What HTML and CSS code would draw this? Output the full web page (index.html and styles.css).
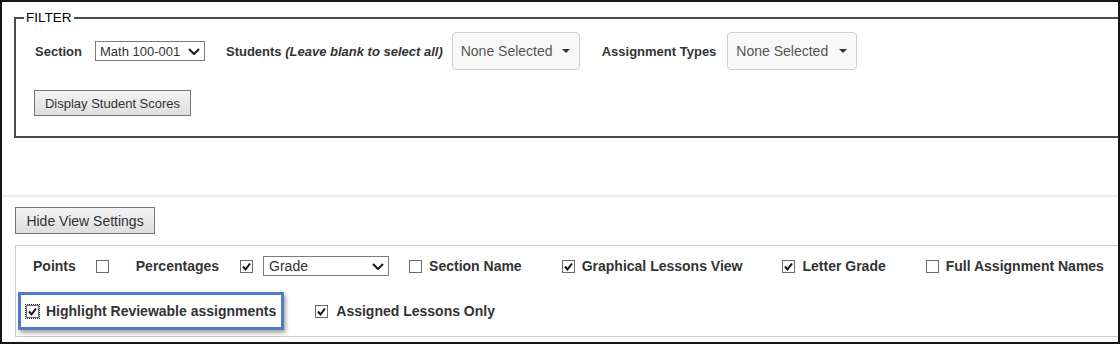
FILE: index.html
```html
<!DOCTYPE html>
<html>
<head>
<meta charset="utf-8">
<link rel="stylesheet" href="styles.css">
</head>
<body>
<div class="frame">
  <fieldset class="filter">
    <legend>FILTER</legend>
    <div class="filter-row">
      <span class="flabel section-label">Section</span>
      <div class="select sel-section"><span>Math 100-001</span><svg class="chev" width="12" height="7" viewBox="0 0 12 7"><path d="M1 1 L6 6 L11 1" /></svg></div>
      <span class="flabel students-label">Students <em>(Leave blank to select all)</em></span>
      <button class="ms ms-students"><span>None Selected</span><span class="caret"></span></button>
      <span class="flabel types-label">Assignment Types</span>
      <button class="ms ms-types"><span>None Selected</span><span class="caret"></span></button>
    </div>
    <div class="filter-actions">
      <button class="btn btn-display">Display Student Scores</button>
    </div>
  </fieldset>

  <div class="view">
    <button class="btn btn-hide">Hide View Settings</button>
    <div class="settings">
      <div class="srow srow1">
        <span class="slabel points-label">Points</span>
        <span class="cb cb-points"></span>
        <span class="slabel pct-label">Percentages</span>
        <span class="cb cb-pct"><svg width="11" height="11" viewBox="0 0 11 11"><path d="M2 5.5 L4.5 8.5 L9 2.5" /></svg></span>
        <div class="select sel-grade"><span>Grade</span><svg class="chev" width="12" height="7" viewBox="0 0 12 7"><path d="M1 1 L6 6 L11 1" /></svg></div>
        <span class="opt"><span class="cb"></span><span class="slabel">Section Name</span></span>
        <span class="opt"><span class="cb"><svg width="11" height="11" viewBox="0 0 11 11"><path d="M2 5.5 L4.5 8.5 L9 2.5" /></svg></span><span class="slabel">Graphical Lessons View</span></span>
        <span class="opt"><span class="cb"><svg width="11" height="11" viewBox="0 0 11 11"><path d="M2 5.5 L4.5 8.5 L9 2.5" /></svg></span><span class="slabel">Letter Grade</span></span>
        <span class="opt"><span class="cb"></span><span class="slabel">Full Assignment Names</span></span>
      </div>
      <div class="srow srow2">
        <div class="highlight"><span class="cb cb-focus"><svg width="11" height="11" viewBox="0 0 11 11"><path d="M2 5.5 L4.5 8.5 L9 2.5" /></svg></span><span class="slabel">Highlight Reviewable assignments</span></div>
        <span class="opt opt-assigned"><span class="cb"><svg width="11" height="11" viewBox="0 0 11 11"><path d="M2 5.5 L4.5 8.5 L9 2.5" /></svg></span><span class="slabel">Assigned Lessons Only</span></span>
      </div>
    </div>
  </div>
</div>
</body>
</html>
```

FILE: styles.css
```css
html, body {
  margin: 0;
  padding: 0;
  background: #fff;
}

body {
  font-family: "Liberation Sans", Arial, sans-serif;
  color: #333;
}

.frame {
  width: 1120px;
  height: 344px;
  box-sizing: border-box;
  border: 2px solid #151515;
  overflow: hidden;
  background: #fff;
}

/* ---------- Filter fieldset ---------- */
.filter {
  margin: 8px 0 0 12px;
  padding: 0 0 20px 0;
  border: 2px solid #4a4a4a;
  width: 1110px;
  box-sizing: border-box;
  min-width: 0;
}

.filter legend {
  margin-left: 8px;
  padding: 0 2px;
  font-size: 13.5px;
  line-height: 15px;
  color: #000;
}

.filter-row {
  display: flex;
  align-items: center;
  height: 38px;
  margin-top: 7px;
  padding-left: 19px;
}

.flabel {
  font-size: 13px;
  font-weight: bold;
  color: #333;
  white-space: nowrap;
}

.flabel em {
  font-style: italic;
}

.section-label {
  margin-right: 13px;
}

.students-label {
  margin-left: 21px;
  margin-right: 9px;
}

.types-label {
  margin-left: 22px;
  margin-right: 11px;
}

.select {
  display: flex;
  align-items: center;
  justify-content: space-between;
  box-sizing: border-box;
  height: 20px;
  border: 1px solid #7a7a7a;
  background: #fff;
  color: #333;
  font-size: 13px;
  padding: 0 4px 0 4px;
}

.chev path {
  fill: none;
  stroke: #1a1a1a;
  stroke-width: 2;
}

.sel-section {
  width: 110px;
}

.ms {
  display: flex;
  align-items: center;
  justify-content: space-between;
  box-sizing: border-box;
  height: 38px;
  border: 1px solid #cfcfcf;
  border-radius: 4px;
  background: #f8f8f8;
  color: #555;
  font-family: "Liberation Sans", Arial, sans-serif;
  font-size: 14px;
  padding: 0 9px 0 8px;
  margin: 0;
  white-space: nowrap;
}

.ms-students {
  width: 128px;
}

.ms-types {
  width: 130px;
}

.caret {
  width: 0;
  height: 0;
  border-top: 4px solid #333;
  border-left: 4px solid transparent;
  border-right: 4px solid transparent;
}

.filter-actions {
  margin-top: 20px;
  padding-left: 18px;
  display: flex;
}

.btn {
  box-sizing: border-box;
  border: 1px solid #767676;
  border-radius: 0;
  background: linear-gradient(#f4f4f4, #dedede);
  color: #333;
  font-family: "Liberation Sans", Arial, sans-serif;
  margin: 0;
  padding: 0;
  white-space: nowrap;
  text-align: center;
}

.btn-display {
  width: 157px;
  height: 26px;
  font-size: 13px;
}

/* ---------- View settings ---------- */
.view {
  margin-top: 57px;
  border-top: 2px solid #ececec;
  padding: 10px 0 0 13px;
}

.btn-hide {
  display: block;
  width: 140px;
  height: 27px;
  font-size: 14px;
}

.settings {
  margin-top: 11px;
  width: 1120px;
  border: 1px solid #cccccc;
  border-right: none;
  padding: 10px 0 6px 17px;
}

.srow {
  display: flex;
  align-items: center;
}

.srow1 {
  height: 20px;
}

.srow2 {
  height: 38px;
  margin-top: 16px;
  margin-left: -15px;
}

.slabel {
  font-size: 14px;
  font-weight: bold;
  color: #333;
  white-space: nowrap;
}

.cb {
  display: inline-flex;
  align-items: center;
  justify-content: center;
  box-sizing: border-box;
  width: 13px;
  height: 13px;
  border: 1px solid #6a6a6a;
  background: #fff;
  flex: none;
}

.cb svg path {
  fill: none;
  stroke: #111;
  stroke-width: 2;
}

.points-label {
  margin-right: 20px;
}

.cb-points {
  margin-right: 27px;
}

.pct-label {
  margin-right: 21px;
}

.cb-pct {
  margin-right: 10px;
}

.sel-grade {
  width: 126px;
  font-size: 14px;
  padding-left: 5px;
  margin-right: 20px;
}

.opt {
  display: inline-flex;
  align-items: center;
}

.opt .cb {
  margin-right: 7px;
}

.opt .slabel {
  margin-right: 40px;
}

.highlight {
  display: flex;
  align-items: center;
  box-sizing: border-box;
  height: 38px;
  border: 3px solid #4d7bc8;
  box-shadow: 2px 3px 4px rgba(0, 0, 0, 0.35);
  padding: 0 5px 0 5px;
  margin-right: 31px;
}

.highlight .cb {
  margin-right: 7px;
}

.cb-focus {
  outline: 1px dotted #222;
  outline-offset: 0;
}

.opt-assigned .cb {
  margin-right: 8px;
}
```
